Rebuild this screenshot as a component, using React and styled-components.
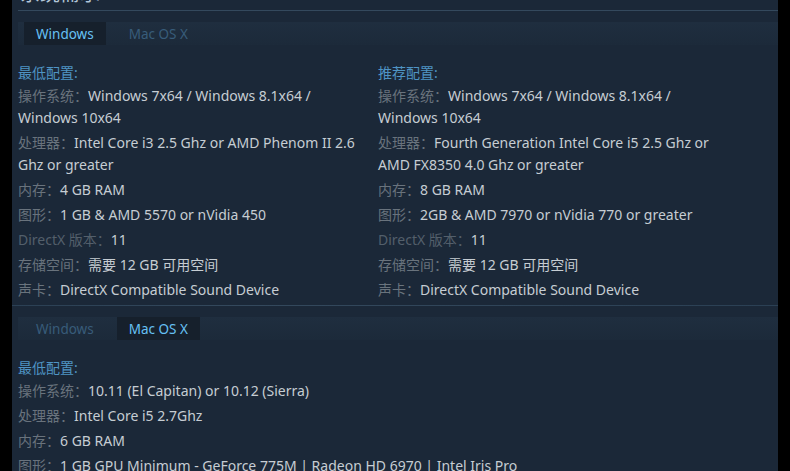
import React from 'react';
import styled, {createGlobalStyle} from "styled-components";

const GlobalStyle = createGlobalStyle`
  body {
    margin: 0;
    background: #000;
  }
`
const Page = styled.div`
  display: flex;
  height: 471px;
  overflow: hidden;
  padding: 0 12px;
  background: #000;
  font-family: "Noto Sans", "Noto Sans CJK SC", sans-serif;
`
const Panel = styled.div`
  flex: 1;
  background: #1b2838;
  padding: 0 0 0 6px;
`
const Heading = styled.h2`
  margin: -18px 0 0 0;
  padding: 0 0 4px 2px;
  font-size: 20px;
  line-height: 24px;
  font-weight: normal;
  color: #b3c6d8;
  border-bottom: 1px solid #34495d;
`
const Section = styled.div`
  padding-top: 11px;
`
const Separator = styled.div`
  height: 1px;
  margin: 1px 0 0 -6px;
  background: linear-gradient(to right, #2b4054, #34495d 30%, #2b4054);
`
const TabBar = styled.div`
  display: flex;
  gap: 11px;
  height: 23px;
  padding-left: 6px;
  background: linear-gradient(to bottom, #1f2e3f, #1c2a3a);
`
const Tab = styled.div`
  display: flex;
  align-items: center;
  padding: 0 12px;
  font-size: 13.5px;
  color: ${p => p.$active ? "#66c0f4" : "#385c7a"};
  background: ${p => p.$active ? "#16202c" : "transparent"};
`
const Columns = styled.div`
  display: grid;
  grid-template-columns: 360px 360px;
  margin-top: 17px;
`
const Column = styled.div`
  grid-column: ${p => p.$wide ? "1 / -1" : "auto"};
  padding-right: 10px;
`
const Title = styled.div`
  font-size: 14px;
  line-height: 22px;
  margin-bottom: 1px;
  color: #4f94c4;
`
const List = styled.ul`
  list-style: none;
  margin: 0;
  padding: 0;
`
const Item = styled.li`
  font-size: 14px;
  line-height: 22px;
  margin-bottom: 3px;
  color: #c6cdd3;
`
const Label = styled.span`
  color: ${p => p.$dim ? "#535f6b" : "#69737d"};
`

const windowsMin = [
  ["操作系统：", "Windows 7x64 / Windows 8.1x64 / Windows 10x64"],
  ["处理器：", "Intel Core i3 2.5 Ghz or AMD Phenom II 2.6 Ghz or greater"],
  ["内存：", "4 GB RAM"],
  ["图形：", "1 GB & AMD 5570 or nVidia 450"],
  ["DirectX 版本：", "11", true],
  ["存储空间：", "需要 12 GB 可用空间"],
  ["声卡：", "DirectX Compatible Sound Device"],
]
const windowsRec = [
  ["操作系统：", "Windows 7x64 / Windows 8.1x64 / Windows 10x64"],
  ["处理器：", "Fourth Generation Intel Core i5 2.5 Ghz or AMD FX8350 4.0 Ghz or greater"],
  ["内存：", "8 GB RAM"],
  ["图形：", "2GB & AMD 7970 or nVidia 770 or greater"],
  ["DirectX 版本：", "11", true],
  ["存储空间：", "需要 12 GB 可用空间"],
  ["声卡：", "DirectX Compatible Sound Device"],
]
const macMin = [
  ["操作系统：", "10.11 (El Capitan) or 10.12 (Sierra)"],
  ["处理器：", "Intel Core i5 2.7Ghz"],
  ["内存：", "6 GB RAM"],
  ["图形：", "1 GB GPU Minimum - GeForce 775M | Radeon HD 6970 | Intel Iris Pro"],
]

const Requirements = ({title, rows, wide}) => (
  <Column $wide={wide}>
    <Title>{title}</Title>
    <List>
      {rows.map(([label, value, dim]) => (
        <Item key={label}>
          <Label $dim={dim}>{label}</Label>{value}
        </Item>
      ))}
    </List>
  </Column>
)

const PlatformSection = ({active, children}) => (
  <Section>
    <TabBar>
      <Tab $active={active === "win"}>Windows</Tab>
      <Tab $active={active === "mac"}>Mac OS X</Tab>
    </TabBar>
    <Columns>{children}</Columns>
  </Section>
)

export default function App() {
  return (
    <Page>
      <GlobalStyle/>
      <Panel>
        <Heading>系统需求</Heading>
        <PlatformSection active="win">
          <Requirements title="最低配置:" rows={windowsMin}/>
          <Requirements title="推荐配置:" rows={windowsRec}/>
        </PlatformSection>
        <Separator/>
        <PlatformSection active="mac">
          <Requirements title="最低配置:" rows={macMin} wide/>
        </PlatformSection>
      </Panel>
    </Page>
  );
}
